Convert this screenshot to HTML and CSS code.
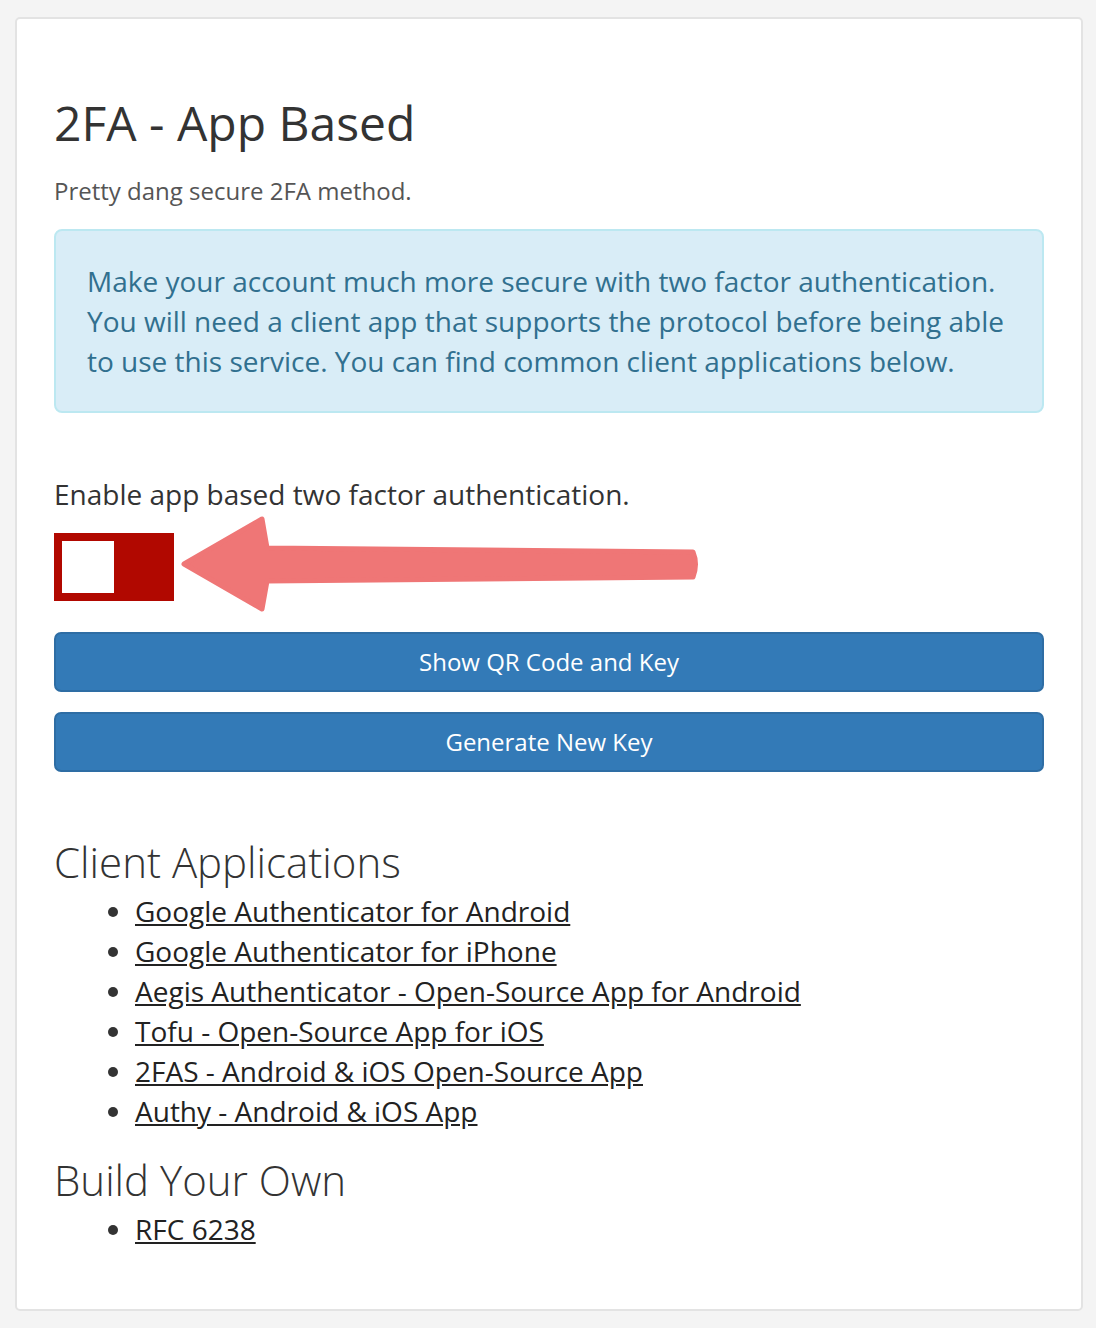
FILE: index.html
```html
<!DOCTYPE html>
<html lang="en">
<head>
    <meta charset="UTF-8">
    <title>2FA - App Based</title>
    <link rel="stylesheet" href="styles.css">
</head>
<body>
    <div class="card">
        <h1>2FA - App Based</h1>
        <p class="subtitle">Pretty dang secure 2FA method.</p>

        <div class="alert-info">
            Make your account much more secure with two factor authentication.
            You will need a client app that supports the protocol before being able
            to use this service. You can find common client applications below.
        </div>

        <p class="toggle-label">Enable app based two factor authentication.</p>
        <div class="toggle-row">
            <div class="toggle"><span class="knob"></span></div>
            <svg class="arrow" width="524" height="102" viewBox="178 514 524 102">
                <path d="M184 565 L262 520 L267 549 L693 553 Q698 565 693 578 L267 582 L262 610 Z"
                      fill="#ef7676" stroke="#ef7676" stroke-width="5" stroke-linejoin="round"/>
            </svg>
        </div>

        <button class="btn">Show QR Code and Key</button>
        <button class="btn btn-second">Generate New Key</button>

        <h3>Client Applications</h3>
        <ul class="apps">
            <li><a href="#">Google Authenticator for Android</a></li>
            <li><a href="#">Google Authenticator for iPhone</a></li>
            <li><a href="#">Aegis Authenticator - Open-Source App for Android</a></li>
            <li><a href="#">Tofu - Open-Source App for iOS</a></li>
            <li><a href="#">2FAS - Android &amp; iOS Open-Source App</a></li>
            <li><a href="#">Authy - Android &amp; iOS App</a></li>
        </ul>

        <h3 class="build">Build Your Own</h3>
        <ul class="apps">
            <li><a href="#">RFC 6238</a></li>
        </ul>
    </div>
</body>
</html>
```

FILE: styles.css
```css
body {
    font-family: "Open Sans", "Liberation Sans", sans-serif;
    margin: 0;
    padding: 0;
    background-color: #f4f4f4;
    color: #333;
}

.card {
    margin: 17px 13px 19px 15px;
    padding: 78px 37px 60px 37px;
    background-color: #fff;
    border: 2px solid #e3e3e3;
    border-radius: 5px;
}

h1 {
    font-size: 48px;
    font-weight: 400;
    line-height: 1.1;
    margin: 0;
}

.subtitle {
    font-size: 24px;
    line-height: 34px;
    color: #555;
    margin: 24px 0 0 0;
}

.alert-info {
    margin-top: 21px;
    padding: 30px 31px;
    background-color: #d9edf7;
    border: 2px solid #bce8f1;
    border-radius: 8px;
    color: #31708f;
    font-size: 28px;
    line-height: 40px;
}

.toggle-label {
    font-size: 28px;
    line-height: 40px;
    margin: 61px 0 0 0;
}

.toggle-row {
    position: relative;
    margin-top: 19px;
    height: 68px;
}

.toggle {
    width: 120px;
    height: 68px;
    box-sizing: border-box;
    padding: 8px;
    background-color: #b10800;
}

.toggle .knob {
    display: block;
    width: 52px;
    height: 52px;
    background-color: #fff;
}

.arrow {
    position: absolute;
    left: 124px;
    top: -20px;
}

.btn {
    display: block;
    width: 100%;
    margin-top: 31px;
    padding: 11px 24px;
    font-family: inherit;
    font-size: 24px;
    line-height: 34px;
    color: #fff;
    background-color: #337ab7;
    border: 2px solid #2e6da4;
    border-radius: 7px;
}

.btn-second {
    margin-top: 20px;
}

h3 {
    font-size: 42px;
    font-weight: 300;
    line-height: 1.1;
    margin: 67px 0 0 0;
}

h3.build {
    margin-top: 26px;
}

.apps {
    margin: 6px 0 0 0;
    padding-left: 81px;
    font-size: 28px;
    line-height: 40px;
}

.apps a {
    color: #222;
    text-decoration: underline;
}
```
